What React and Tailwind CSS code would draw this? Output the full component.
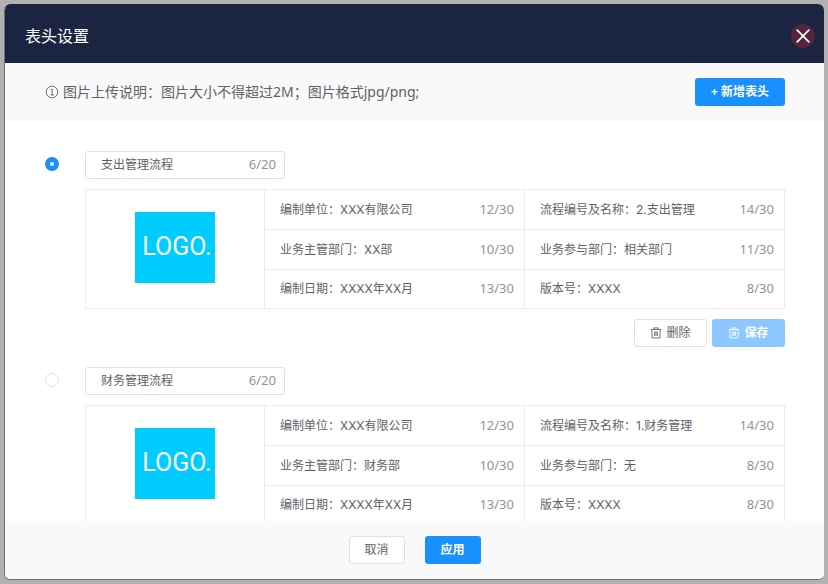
import { useState } from "react";

const templates = [
  {
    id: "expense",
    name: "支出管理流程",
    nameCount: "6/20",
    fields: [
      { value: "编制单位：XXX有限公司", count: "12/30" },
      { value: "流程编号及名称：2.支出管理", count: "14/30" },
      { value: "业务主管部门：XX部", count: "10/30" },
      { value: "业务参与部门：相关部门", count: "11/30" },
      { value: "编制日期：XXXX年XX月", count: "13/30" },
      { value: "版本号：XXXX", count: "8/30" },
    ],
  },
  {
    id: "finance",
    name: "财务管理流程",
    nameCount: "6/20",
    fields: [
      { value: "编制单位：XXX有限公司", count: "12/30" },
      { value: "流程编号及名称：1.财务管理", count: "14/30" },
      { value: "业务主管部门：财务部", count: "10/30" },
      { value: "业务参与部门：无", count: "8/30" },
      { value: "编制日期：XXXX年XX月", count: "13/30" },
      { value: "版本号：XXXX", count: "8/30" },
    ],
  },
];

function TrashIcon() {
  return (
    <svg className="size-3" viewBox="0 0 12 12" fill="none" stroke="currentColor" strokeWidth="0.9" aria-hidden="true">
      <path d="M0.8 2.5h10.4M4 2.5V0.9h4v1.6M2 2.5v8.4h8V2.5M4.6 4.5v4.4M6 4.5v4.4M7.4 4.5v4.4" />
    </svg>
  );
}

function InfoIcon() {
  return (
    <svg className="size-3.5 shrink-0" viewBox="0 0 14 14" fill="none" stroke="currentColor" strokeWidth="0.9" aria-hidden="true">
      <circle cx="7" cy="7" r="5.8" />
      <path d="M5.6 5.1L7.2 4v6M5.4 10h3.6" />
    </svg>
  );
}

function CountedInput({ label, value, count }) {
  return (
    <label className="flex h-full min-w-0 items-center">
      <input
        type="text"
        aria-label={label}
        defaultValue={value}
        className="h-6 min-w-0 flex-1 bg-transparent font-['Inter','Noto_Sans_CJK_SC',sans-serif] text-xs leading-6 text-[#606266] outline-none"
      />
      <span className="text-[13px] text-[#909399]">{count}</span>
    </label>
  );
}

function Template({ item, selected, onSelect }) {
  return (
    <section className="flex gap-[26px]">
      <input
        type="radio"
        name="template"
        aria-label={item.name}
        checked={selected}
        onChange={onSelect}
        className="mt-1.5 size-3.5 shrink-0 appearance-none rounded-full border border-[#dcdfe6] bg-white checked:border-[5px] checked:border-[#1890ff]"
      />
      <div className="min-w-0 flex-1">
        <div className="h-7 w-[200px] rounded-[3px] border border-[#dcdfe6] pr-2 pl-[15px]">
          <CountedInput label="流程名称" value={item.name} count={item.nameCount} />
        </div>
        <div className="mt-2.5 flex border-t border-l border-[#ebebeb]">
          <div className="flex w-[179px] shrink-0 items-center justify-center border-r border-b border-[#ebebeb] pb-1">
            <div className="flex h-[71px] w-20 items-center justify-center bg-[#00ccff] pb-0.5 pl-1 font-['Roboto',sans-serif] text-[25px] leading-none text-white">
              LOGO.
            </div>
          </div>
          <div className="grid min-w-0 flex-1 grid-cols-2 grid-rows-[40px_40px_39px]">
            {item.fields.map((field) => (
              <div key={field.value} className="min-w-0 border-r border-b border-[#ebebeb] pr-2.5 pl-[15px]">
                <CountedInput label={field.value.split("：")[0]} value={field.value} count={field.count} />
              </div>
            ))}
          </div>
        </div>
        <div className="mt-2.5 flex justify-end gap-[5px] text-xs">
          <button type="button" className="flex h-7 w-[73px] items-center justify-center gap-1 rounded-[3px] border border-[#dcdfe6] bg-white text-[#606266]">
            <TrashIcon />
            删除
          </button>
          <button type="button" className="flex h-7 w-[73px] items-center justify-center gap-1 rounded-[3px] bg-[#8cc8ff] font-bold text-white">
            <TrashIcon />
            保存
          </button>
        </div>
      </div>
    </section>
  );
}

export default function App() {
  const [selected, setSelected] = useState("expense");
  return (
    <div className="flex h-screen bg-[#b1b1b1] p-1 font-['Noto_Sans','Noto_Sans_CJK_SC',sans-serif]">
      <main role="dialog" aria-labelledby="dialog-title" className="flex min-w-0 flex-1 flex-col overflow-hidden rounded-md border-b border-l border-[#707070] bg-white">
        <header className="flex h-[59px] shrink-0 items-center justify-between bg-[#1b2440] pt-1 pr-[9px] pl-5 text-white">
          <h1 id="dialog-title" className="text-base">表头设置</h1>
          <button type="button" aria-label="关闭" className="flex size-6 items-center justify-center rounded-full bg-[#55243d]">
            <svg className="size-3.5" viewBox="0 0 14 14" stroke="currentColor" strokeWidth="1.7" strokeLinecap="round">
              <path d="M1.2 1.2l11.6 11.6M12.8 1.2L1.2 12.8" />
            </svg>
          </button>
        </header>
        <div className="flex h-[58px] shrink-0 items-center justify-between bg-[#f9f9f9] pr-[39px] pl-10">
          <p className="flex items-center gap-1 text-sm text-[#606266]">
            <InfoIcon />
            图片上传说明：图片大小不得超过2M；图片格式jpg/png;
          </p>
          <button type="button" className="h-7 w-[90px] rounded-[3px] bg-[#1890ff] text-xs font-bold text-white">
            + 新增表头
          </button>
        </div>
        <div className="flex min-h-0 flex-1 flex-col gap-5 overflow-hidden pt-[30px] pr-[39px] pl-10">
          {templates.map((item) => (
            <Template key={item.id} item={item} selected={selected === item.id} onSelect={() => setSelected(item.id)} />
          ))}
        </div>
        <footer className="flex h-[58px] shrink-0 items-center justify-center gap-5 bg-[#f9f9f9] text-xs">
          <button type="button" className="h-7 w-14 rounded-[3px] border border-[#dcdfe6] bg-white text-[#606266]">取消</button>
          <button type="button" className="h-7 w-14 rounded-[3px] bg-[#1890ff] font-bold text-white">应用</button>
        </footer>
      </main>
    </div>
  );
}
